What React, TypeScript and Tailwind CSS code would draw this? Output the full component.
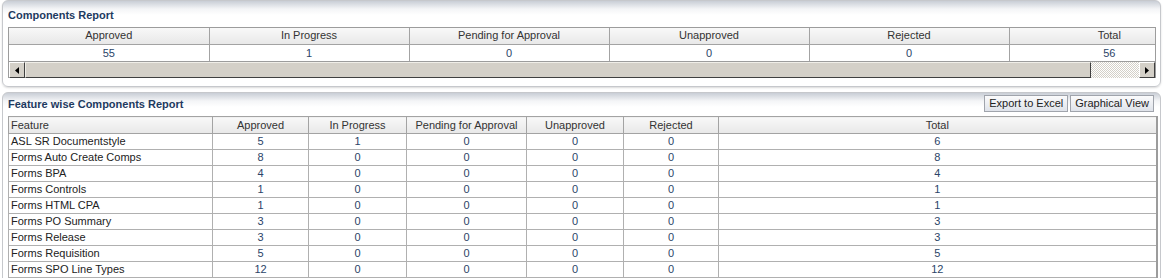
import React from "react";

const topCols = ["Approved", "In Progress", "Pending for Approval", "Unapproved", "Rejected", "Total"];
const topVals = ["55", "1", "0", "0", "0", "56"];

const rows: [string, string, string, string, string, string, string][] = [
  ["ASL SR Documentstyle", "5", "1", "0", "0", "0", "6"],
  ["Forms Auto Create Comps", "8", "0", "0", "0", "0", "8"],
  ["Forms BPA", "4", "0", "0", "0", "0", "4"],
  ["Forms Controls", "1", "0", "0", "0", "0", "1"],
  ["Forms HTML CPA", "1", "0", "0", "0", "0", "1"],
  ["Forms PO Summary", "3", "0", "0", "0", "0", "3"],
  ["Forms Release", "3", "0", "0", "0", "0", "3"],
  ["Forms Requisition", "5", "0", "0", "0", "0", "5"],
  ["Forms SPO Line Types", "12", "0", "0", "0", "0", "12"],
];

const bottomCols = ["Feature", "Approved", "In Progress", "Pending for Approval", "Unapproved", "Rejected", "Total"];
const bottomWidths = [204, 96, 98, 120, 97, 95, 438];

function Arrow({ dir }: { dir: "left" | "right" }) {
  return (
    <div className="w-[16px] h-[16px] shrink-0 bg-[#d4d0c8] border-t border-l border-t-white border-l-white border-r border-b border-r-[#404040] border-b-[#404040] flex items-center justify-center">
      <svg width="4" height="7" viewBox="0 0 4 7">
        {dir === "left" ? <path d="M4 0 L0 3.5 L4 7 Z" fill="#000" /> : <path d="M0 0 L4 3.5 L0 7 Z" fill="#000" />}
      </svg>
    </div>
  );
}

export default function App() {
  return (
    <div className="w-[1164px] h-[278px] overflow-hidden bg-white font-['Liberation_Sans',Arial,sans-serif] text-[11px] text-[#333]">
      {/* Top panel */}
      <div className="ml-[2px] w-[1159px] h-[87px] rounded-[6px] border border-[#c6c8cc] bg-[linear-gradient(to_bottom,#c9ced6_0px,#f4f5f7_8px,#ffffff_14px)] shadow-[0_1px_2px_rgba(0,0,0,0.15)] px-[5px]">
        <div className="h-[26px] pt-[8px] font-bold text-[11px] leading-[13px] text-[#1e3a5f]">Components Report</div>
        <div className="w-[1148px] border border-[#9c9c9c]">
          <div className="overflow-hidden">
            <table className="table-fixed w-[1200px] border-collapse">
              <tbody>
                <tr>
                  {topCols.map((c, i) => (
                    <td key={c} className={`w-[200px] h-[16px] p-0 text-center leading-[15px] bg-[linear-gradient(#f8f8f8,#e8e8e8)] border-b border-[#a3a3a3] text-[#333] ${i > 0 ? "border-l" : ""}`}>{c}</td>
                  ))}
                </tr>
                <tr>
                  {topVals.map((v, i) => (
                    <td key={i} className={`w-[200px] h-[17px] p-0 text-center leading-[16px] text-[#2b4468] border-[#a3a3a3] ${i > 0 ? "border-l" : ""}`}>{v}</td>
                  ))}
                </tr>
              </tbody>
            </table>
          </div>
          <div className="flex h-[16px] border-t border-[#9c9c9c]">
            <Arrow dir="left" />
            <div className="w-[1066px] h-[16px] bg-[#d4d0c8] border-t border-l border-t-[#f0eee8] border-l-[#f0eee8] border-r border-b border-r-[#404040] border-b-[#404040]" />
            <div className="flex-1 h-[16px] bg-[repeating-conic-gradient(#d4d0c8_0%_25%,#ffffff_0%_50%)] bg-[length:2px_2px]" />
            <Arrow dir="right" />
          </div>
        </div>
      </div>

      {/* Bottom panel */}
      <div className="ml-[2px] mt-[5px] w-[1159px] h-[200px] rounded-t-[6px] border border-[#c6c8cc] bg-[linear-gradient(to_bottom,#c9ced6_0px,#f4f5f7_8px,#ffffff_14px)] px-[5px]">
        <div className="flex items-start justify-between h-[23px]">
          <div className="pt-[5px] font-bold text-[11px] leading-[13px] text-[#1e3a5f]">Feature wise Components Report</div>
          <div className="flex gap-[2px] pt-[2px] pr-[1px]">
            <div className="h-[17px] px-[4px] leading-[15px] text-[11px] text-[#222] border border-[#a0a4ac] bg-[linear-gradient(#fbfbfc,#dfe3ea)]">Export to Excel</div>
            <div className="h-[17px] px-[4px] leading-[15px] text-[11px] text-[#222] border border-[#a0a4ac] bg-[linear-gradient(#fbfbfc,#dfe3ea)]">Graphical View</div>
          </div>
        </div>
        <table className="table-fixed w-[1148px] border-collapse border border-[#9c9c9c] border-r-2 border-r-[#9c9c9c]">
          <colgroup>
            {bottomWidths.map((w, i) => (
              <col key={i} style={{ width: w }} />
            ))}
          </colgroup>
          <thead>
            <tr>
              {bottomCols.map((c, i) => (
                <th key={c} className={`h-[17px] p-0 font-normal leading-[16px] bg-[linear-gradient(#f8f8f8,#e8e8e8)] border border-[#a3a3a3] text-[#333] ${i === 0 ? "text-left pl-[2px]" : "text-center"}`}>{c}</th>
              ))}
            </tr>
          </thead>
          <tbody>
            {rows.map((r) => (
              <tr key={r[0]}>
                {r.map((v, i) => (
                  <td key={i} className={`h-[16px] p-0 leading-[15px] border border-[#b0b0b0] ${i === 0 ? "text-left pl-[2px] text-[#222]" : "text-center text-[#2b4468]"}`}>{v}</td>
                ))}
              </tr>
            ))}
          </tbody>
        </table>
      </div>
    </div>
  );
}
